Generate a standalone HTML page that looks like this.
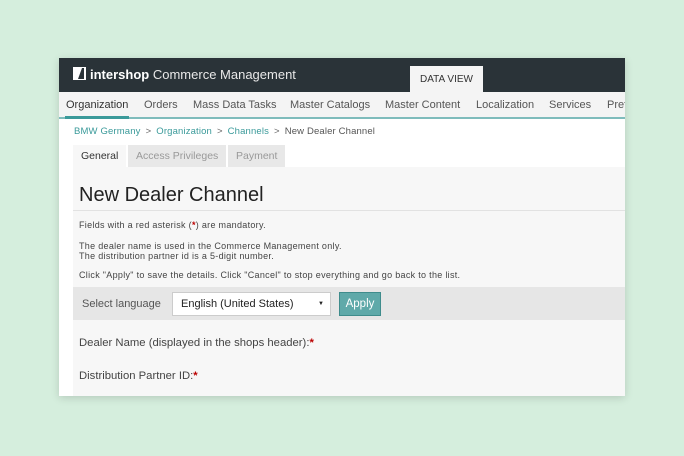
<!DOCTYPE html>
<html><head><meta charset="utf-8"><style>
*{margin:0;padding:0;box-sizing:border-box}
body{width:684px;height:456px;background:#d5eedd;font-family:"Liberation Sans",sans-serif;position:relative;overflow:hidden}
.win{position:absolute;left:59px;top:58px;width:566px;height:338px;background:#fff;overflow:hidden;box-shadow:0 2px 8px rgba(0,0,0,.15)}
.hdr{height:34px;background:#2a3338;position:relative}
.logo{position:absolute;left:14px;top:9px;color:#fff;font-size:13px;white-space:nowrap}
.logo b{font-weight:bold;margin-left:4px}
.logo span{font-weight:normal;color:#e8e8e8}
.dv{position:absolute;left:351px;top:8px;width:73px;height:26px;background:#f4f4f4;color:#333;font-size:10px;text-align:center;line-height:28px}
.nav{height:27px;background:#f4f4f4;border-bottom:2px solid #7fbcbc;font-size:11px;color:#555;white-space:nowrap;position:relative}
.nav span{position:absolute;top:7px}
.nav .a{color:#333}
.ul{position:absolute;left:6px;bottom:-2px;width:64px;height:3px;background:#3b9a9a}
.bc{position:absolute;left:15px;top:68px;font-size:9.5px;letter-spacing:.15px;color:#3a9a9a;white-space:nowrap}
.bc i{font-style:normal;color:#666;margin:0 5px}
.tabs{position:absolute;left:14px;top:87px;height:22px;font-size:10.5px}
.tabs div{position:absolute;top:0;height:22px;line-height:22px;background:#e8e8e8;color:#999;padding:0 8px;white-space:nowrap}
.panel{position:absolute;left:14px;top:109px;width:560px;height:240px;background:#f7f7f7}
h1{position:absolute;left:6px;top:17px;font-size:20px;font-weight:normal;color:#222}
.ln{position:absolute;left:0;top:43px;width:100%;border-top:1px solid #e2e2e2}
.t{position:absolute;left:6px;font-size:9px;letter-spacing:.3px;color:#444;white-space:nowrap}
.r{color:#b00;font-weight:bold}
.bar{position:absolute;left:0;top:120px;width:100%;height:33px;background:#e6e6e6}
.sel{position:absolute;left:99px;top:5px;width:159px;height:24px;background:#fff;border:1px solid #ccc;font-size:11px;color:#222;line-height:22px;padding-left:8px}
.sel:after{content:"▼";position:absolute;right:6px;top:0;font-size:6px}
.btn{position:absolute;left:266px;top:5px;width:42px;height:24px;background:#5fa9a9;border:1px solid #3f8c8c;color:#fff;font-size:11.5px;text-align:center;line-height:22px}
.lb{position:absolute;left:6px;font-size:11.3px;color:#444;white-space:nowrap}
</style></head><body>
<div class="win">
<div class="hdr">
<div class="logo"><svg width="13" height="13" viewBox="0 0 13 13" style="vertical-align:-1px"><rect width="13" height="13" fill="#fff"/><path d="M5 12 L9 1 L11 1 L11 12 Z" fill="#2a3338"/></svg><b>intershop</b> <span>Commerce Management</span></div>
<div class="dv">DATA VIEW</div>
</div>
<div class="nav">
<span class="a" style="left:7px">Organization</span>
<span style="left:85px">Orders</span>
<span style="left:134px">Mass Data Tasks</span>
<span style="left:231px">Master Catalogs</span>
<span style="left:326px">Master Content</span>
<span style="left:417px">Localization</span>
<span style="left:490px">Services</span>
<span style="left:548px">Pref</span>
<div class="ul"></div>
</div>
<div class="bc">BMW Germany<i>&gt;</i>Organization<i>&gt;</i>Channels<i>&gt;</i><span style="color:#555">New Dealer Channel</span></div>
<div class="tabs">
<div style="left:0;background:#f7f7f7;color:#333">General</div>
<div style="left:55px">Access Privileges</div>
<div style="left:155px">Payment</div>
</div>
<div class="panel">
<h1>New Dealer Channel</h1>
<div class="ln"></div>
<div class="t" style="top:53px">Fields with a red asterisk (<span class="r">*</span>) are mandatory.</div>
<div class="t" style="top:74px">The dealer name is used in the Commerce Management only.</div>
<div class="t" style="top:84px">The distribution partner id is a 5-digit number.</div>
<div class="t" style="top:103px">Click "Apply" to save the details. Click "Cancel" to stop everything and go back to the list.</div>
<div class="bar">
<div class="lb" style="top:11px;left:9px;color:#555;font-size:11px">Select language</div>
<div class="sel">English (United States)</div>
<div class="btn">Apply</div>
</div>
<div class="lb" style="top:170px">Dealer Name (displayed in the shops header):<span class="r">*</span></div>
<div class="lb" style="top:203px">Distribution Partner ID:<span class="r">*</span></div>
</div>
</div>
</body></html>
